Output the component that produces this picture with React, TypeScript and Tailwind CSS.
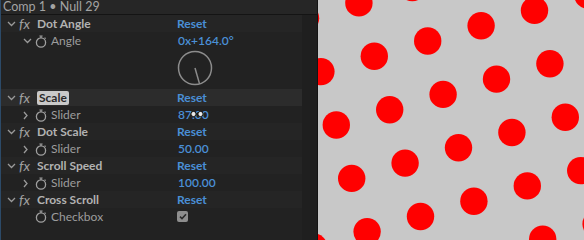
import React from 'react'

const ui = { fontFamily: 'Lato, "Noto Sans", sans-serif' }

function Chevron({ open }: { open: boolean }) {
    return open ? (
        <svg width="9" height="6" viewBox="0 0 9 6" className="text-[#9a9a9a]">
            <path d="M1 1 L4.5 4.5 L8 1" fill="none" stroke="currentColor" strokeWidth="1.3" />
        </svg>
    ) : (
        <svg width="5" height="9" viewBox="0 0 5 9" className="text-[#9a9a9a]">
            <path d="M1 1 L4 4.5 L1 8" fill="none" stroke="currentColor" strokeWidth="1.3" />
        </svg>
    )
}

function Stopwatch() {
    return (
        <svg width="12" height="13" viewBox="0 0 12 13" className="text-[#a0a0a0]">
            <circle cx="6" cy="7.5" r="4.6" fill="none" stroke="currentColor" strokeWidth="1.3" />
            <path d="M6 0.8 V2.9 M4.4 1 H7.6 M9.6 2.6 L10.6 3.6" stroke="currentColor" strokeWidth="1.2" fill="none" />
        </svg>
    )
}

function EffectRow({ name, highlight = false, boxed = false }: { name: string; highlight?: boolean; boxed?: boolean }) {
    return (
        <div className={`grid h-[17px] grid-cols-[176px_1fr] items-center ${highlight ? 'bg-[#2c2c2c]' : 'bg-[#252525]'}`}>
            <div className="flex items-center">
                <div className="flex w-[18px] justify-end pr-[3px]">
                    <Chevron open />
                </div>
                <span className="w-[18px] text-[14px] italic leading-none text-[#a0a0a0]">fx</span>
                <span
                    className={`text-[12px] font-bold leading-[14px] ${boxed ? 'rounded-[2px] bg-[#c9c9c9] px-[2px] text-[#2a2a2a]' : 'text-[#b2b2b2]'}`}
                >
                    {name}
                </span>
            </div>
            <span className="text-[12px] font-bold text-[#4a8fd6]">Reset</span>
        </div>
    )
}

function PropRow({ label, open = false, children }: { label: string; open?: boolean; children?: React.ReactNode }) {
    return (
        <div className="grid h-[17px] grid-cols-[176px_1fr] items-center bg-[#222222]">
            <div className="flex items-center pl-[22px]">
                <div className="flex w-[12px] items-center">
                    <Chevron open={open} />
                </div>
                <div className="flex w-[16px] items-center">
                    <Stopwatch />
                </div>
                <span className="text-[12px] leading-none text-[#9d9d9d]">{label}</span>
            </div>
            <div className="flex items-center pl-px text-[12px] font-semibold text-[#4a8fd6]">{children}</div>
        </div>
    )
}

function Dial() {
    const r = 16.5
    const a = (164 * Math.PI) / 180
    return (
        <div className="grid h-[40px] grid-cols-[176px_1fr] bg-[#222222]">
            <div />
            <svg width="38" height="40" viewBox="0 0 38 40">
                <circle cx="18" cy="19" r={r} fill="none" stroke="#8c8c8c" strokeWidth="1.5" />
                <line x1="18" y1="19" x2={18 + Math.sin(a) * r} y2={19 - Math.cos(a) * r} stroke="#8c8c8c" strokeWidth="1.5" />
            </svg>
        </div>
    )
}

function Dots() {
    const dots: { x: number; y: number }[] = []
    for (let i = -6; i <= 8; i++) {
        for (let j = -6; j <= 8; j++) {
            const x = 56.3 + i * 53.4 + j * 15.4
            const y = 56.3 - i * 15.3 + j * 53.4
            if (x > -20 && x < 290 && y > -20 && y < 260) dots.push({ x, y })
        }
    }
    return (
        <svg width="266" height="240" viewBox="0 0 266 240" className="block">
            <rect width="266" height="240" fill="#c8c8c8" />
            {dots.map((d, k) => (
                <circle key={k} cx={d.x} cy={d.y} r="13.7" fill="#ff0000" />
            ))}
        </svg>
    )
}

export default function App() {
    return (
        <div className="flex h-[240px] w-[584px] overflow-hidden bg-[#222222]" style={ui}>
            <div className="flex w-[317px] flex-col border-l border-[#2c4a68]">
                <div className="flex h-[14px] items-center bg-[#262626] pl-[2px] text-[12.5px] leading-[14px] text-[#a3a3a3]">
                    Comp 1 • Null 29
                </div>
                <div className="h-px bg-[#141414]" />
                <div className="flex flex-1">
                    <div className="w-[301px]">
                        <EffectRow name="Dot Angle" />
                        <PropRow label="Angle" open>
                            0x+164.0°
                        </PropRow>
                        <Dial />
                        <EffectRow name="Scale" highlight boxed />
                        <PropRow label="Slider">
                            <span className="relative">
                                87.00
                                <svg width="14" height="8" viewBox="0 0 14 8" className="absolute left-[12px] top-[4px]">
                                    <circle cx="3.5" cy="4" r="2.6" fill="#e8e8e8" stroke="#111" strokeWidth="1" />
                                    <circle cx="10.5" cy="4" r="2.6" fill="#e8e8e8" stroke="#111" strokeWidth="1" />
                                    <path d="M6 4 H8" stroke="#111" strokeWidth="1.2" />
                                </svg>
                            </span>
                        </PropRow>
                        <EffectRow name="Dot Scale" />
                        <PropRow label="Slider">50.00</PropRow>
                        <EffectRow name="Scroll Speed" />
                        <PropRow label="Slider">100.00</PropRow>
                        <EffectRow name="Cross Scroll" />
                        <div className="grid h-[17px] grid-cols-[176px_1fr] items-center bg-[#222222]">
                            <div className="flex items-center pl-[34px]">
                                <div className="flex w-[16px] items-center">
                                    <Stopwatch />
                                </div>
                                <span className="text-[12px] leading-none text-[#9d9d9d]">Checkbox</span>
                            </div>
                            <div className="flex h-[11px] w-[11px] items-center justify-center rounded-[2px] bg-[#8e8e8e]">
                                <svg width="8" height="7" viewBox="0 0 8 7">
                                    <path d="M1 3.6 L3 5.6 L7 1.2" fill="none" stroke="#2a2a2a" strokeWidth="1.5" />
                                </svg>
                            </div>
                        </div>
                    </div>
                    <div className="flex-1 bg-[#1f1f1f]" />
                </div>
            </div>
            <div className="w-px bg-[#141414]" />
            <Dots />
        </div>
    )
}
